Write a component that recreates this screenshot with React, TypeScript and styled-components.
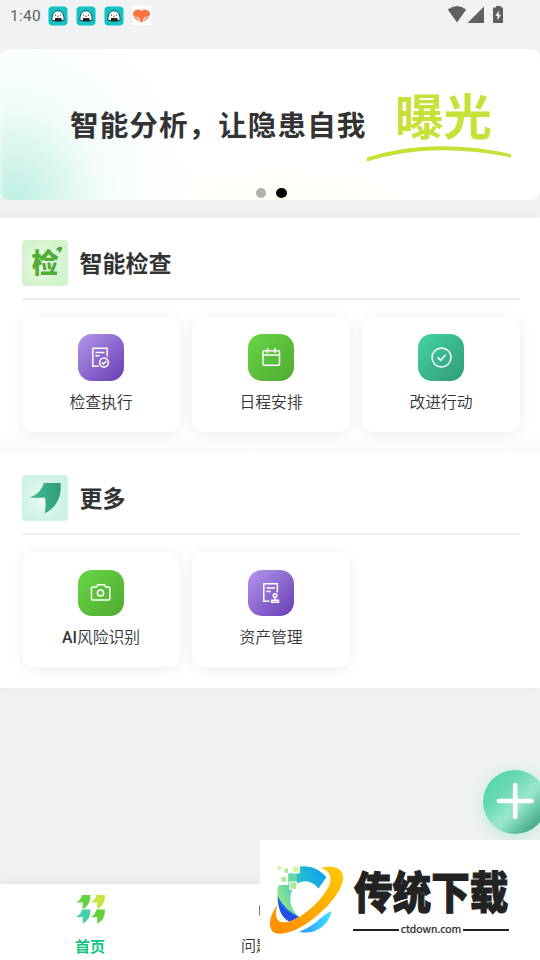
import React from "react";
import styled, { createGlobalStyle } from "styled-components";

const GlobalStyle = createGlobalStyle`
  * { box-sizing: border-box; }
  body {
    margin: 0;
    background: #f0f2f5;
    font-family: Roboto, "Noto Sans CJK SC", sans-serif;
    color: #333;
  }
`;

const Screen = styled.div`
  position: relative;
  width: 540px;
  height: 960px;
  overflow: hidden;
  display: flex;
  flex-direction: column;
  background: #f0f2f4;
`;

const StatusBar = styled.header`
  height: 49px;
  flex: none;
  display: flex;
  align-items: flex-start;
  justify-content: space-between;
  padding: 6px 35px 0 10px;
`;

const StatusGroup = styled.div<{ $gap: number }>`
  display: flex;
  align-items: center;
  height: 19px;
  gap: ${(p) => p.$gap}px;
`;

const Clock = styled.span`
  width: 30px;
  font-size: 15.4px;
  letter-spacing: 0.3px;
  line-height: 19px;
  color: #5e5f60;
  white-space: nowrap;
  padding-top: 1px;
`;

const Banner = styled.section`
  position: relative;
  height: 151px;
  flex: none;
  border-radius: 9px;
  overflow: hidden;
  display: flex;
  padding-left: 70px;
  background:
    linear-gradient(90deg, rgba(255, 255, 255, 0.35), rgba(255, 255, 255, 0) 4px),
    radial-gradient(ellipse 115px 125px at 18px 156px, rgba(176, 235, 220, 0.75), rgba(196, 240, 229, 0.4) 40%, rgba(225, 248, 242, 0.12) 75%, rgba(255, 255, 255, 0) 100%),
    radial-gradient(ellipse 190px 185px at 0 130px, rgba(209, 245, 237, 0.75), rgba(235, 251, 247, 0.5) 50%, rgba(255, 255, 255, 0) 100%),
    radial-gradient(ellipse 200px 50px at 280px 151px, #fffff8, rgba(255, 255, 255, 0)),
    #fff;
`;

const Slogan = styled.div`
  width: 297px;
  padding-top: 54px;
  font-size: 28.6px;
  line-height: 42px;
  letter-spacing: 1.05px;
  font-weight: 700;
  font-family: "Noto Sans CJK SC", sans-serif;
  white-space: nowrap;
`;

const Highlight = styled.div`
  width: 146px;
  display: flex;
  flex-direction: column;
  padding-top: 31px;
  color: #c8e139;
  font: 700 48.4px/68px "Noto Sans CJK SC", sans-serif;
  text-indent: 28px;
  white-space: nowrap;
  svg { display: block; margin-top: -2px; }
`;

const Dots = styled.div`
  position: absolute;
  left: 255.500px;
  bottom: 2px;
  display: flex;
  gap: 10px;
`;

const Dot = styled.i<{ $active?: boolean }>`
  width: ${(p) => (p.$active ? 11 : 10)}px;
  height: 10px;
  border-radius: 50%;
  background: ${(p) => (p.$active ? "#000" : "#b0b0b0")};
`;

const Sections = styled.main`
  margin-top: 18px;
  flex: none;
  box-shadow: 0 0 18px rgba(0, 0, 0, 0.035);
`;

const Section = styled.section`
  height: 235px;
  padding: 22px 20px 0 22px;
  background: #fff;
  &:first-child { background: linear-gradient(#fff 212px, #fafafa 235px); }
`;

const SectionHeader = styled.div`
  display: flex;
  align-items: flex-start;
  gap: 12px;
  height: 60px;
  border-bottom: 2px solid #eee;
`;

const SectionBadge = styled.div<{ $tone: string }>`
  width: 46px;
  height: 46px;
  border-radius: 4px;
  overflow: hidden;
  background: radial-gradient(circle at 45% 50%, #f2fbf2 0, ${(p) => p.$tone} 65%);
  svg { display: block; }
`;

const SectionTitle = styled.h2`
  margin: 0 0 0 -0.5px;
  font: 700 23px/45px "Noto Sans CJK SC", sans-serif;
`;

const CardGrid = styled.div`
  display: grid;
  grid-template-columns: repeat(3, 158px);
  gap: 12px;
  margin-top: 17px;
`;

const Card = styled.button<{ $lower?: boolean }>`
  height: 115px;
  padding: ${(p) => (p.$lower ? 18 : 17)}px 0 0;
  border: 0;
  border-radius: 11px;
  background: #fff;
  box-shadow: 0 2px 14px rgba(0, 0, 0, 0.08);
  display: flex;
  flex-direction: column;
  align-items: center;
  color: #333;
`;

const fills = {
  purple: "linear-gradient(135deg, #b092ea 5%, #6d43b7 92%)",
  green: "linear-gradient(135deg, #66d444 5%, #51ac33 95%)",
  teal: "linear-gradient(135deg, #42d2a4 5%, #329d7b 95%)",
};

const IconTile = styled.span<{ $fill: keyof typeof fills; $lower?: boolean }>`
  width: 46px;
  height: ${(p) => (p.$lower ? 46 : 47)}px;
  border-radius: 14px;
  background: ${(p) => fills[p.$fill]};
  svg { display: block; fill: none; stroke: #fff; stroke-width: 1.5; }
`;

const CardLabel = styled.span`
  margin-top: 10px;
  font: 350 15.8px/24px Roboto, "Noto Sans CJK SC", sans-serif;
  white-space: nowrap;
`;

const Latin = styled.span`
  font-weight: 500;
`;

const AddButton = styled.button`
  position: absolute;
  left: 483px;
  top: 770px;
  width: 64px;
  height: 64px;
  padding: 0;
  border: 0;
  border-radius: 50%;
  background: linear-gradient(135deg, #50d5aa 8%, #68d9b3 32%, #98e6cc 54%, #94e3c9 58%, #52b394 80%, #359c7a);
  box-shadow: 0 3px 16px rgba(66, 210, 164, 0.3);
  svg { display: block; }
`;

const TabBar = styled.nav`
  margin-top: auto;
  height: 77px;
  flex: none;
  display: grid;
  grid-template-columns: repeat(3, 180px);
  background: #fff;
  border-top: 1px solid #e7e8e8;
  box-shadow: 0 -2px 14px rgba(0, 0, 0, 0.06);
`;

const Tab = styled.div<{ $active?: boolean }>`
  display: flex;
  flex-direction: column;
  align-items: center;
  padding-top: 10px;
  gap: 11px;
  font: ${(p) => (p.$active ? 700 : 350)} 15px/22px "Noto Sans CJK SC", sans-serif;
  color: ${(p) => (p.$active ? "#13c584" : "#333")};
  svg { display: block; }
`;

const WideTabLabel = styled.span`
  width: 58px;
  margin-top: -1px;
`;

const SiteMark = styled.aside`
  position: absolute;
  left: 260px;
  top: 840px;
  width: 280px;
  height: 120px;
  padding: 24px 0 0 8px;
  display: flex;
  gap: 8px;
  background: #fff;
  color: #222;
`;

const SiteText = styled.div`
  width: 156px;
`;

const SiteName = styled.div`
  height: 46px;
  margin: 2px 0 8px 1px;
  font: 900 38.6px/46px "Noto Sans CJK SC", sans-serif;
  white-space: nowrap;
  transform: scaleY(1.16);
  -webkit-text-stroke: 0.9px #222;
`;

const SiteAddress = styled.div`
  display: flex;
  align-items: center;
  gap: 2px;
  height: 18px;
  font: 400 10.5px/16px "Noto Sans CJK SC", sans-serif;
  -webkit-text-stroke: 0.2px #222;
  &::before, &::after {
    content: "";
    flex: 1;
    height: 2px;
    margin-top: 2px;
    background: #222;
  }
`;

const ChatBadge = () => (
  <svg width="20" height="20" viewBox="0 0 20 20">
    <rect x=".5" y=".5" width="19" height="19" rx="4" fill="#13c1c3" />
    <path d="M4 14.500C3.500 9 6 4.800 10 4.800S16.500 9 16 14.500Z" fill="#fff" stroke="#17484a" strokeWidth="1" />
    <path d="M7 12h6.500v3.500H7Z" fill="#222" />
    <path d="M7.500 8.500v1.200M12.500 8.500v1.200M9.300 10.200h1.500" stroke="#333" />
  </svg>
);

const HeartBadge = () => (
  <svg width="19" height="19" viewBox="0 0 19 19">
    <path d="M0 0h19v19H0Z" fill="#fff" />
    <circle cx="9.500" cy="9" r="7.500" fill="#fff1e6" />
    <path d="M9.500 16.500C4 14 .8 10.800 1 7.300 1.300 3.500 6.800 2.500 9.500 5c2.700-2.500 8.200-1.500 8.500 2.300.2 3.500-3 6.700-8.500 9.200Z" fill="#fa7444" />
    <path d="m3 10 4 3.500 1 3M16 10l-4 3.500-1 3M6 11l1.500 3M13 11l-1.500 3" stroke="#fff" strokeWidth=".9" fill="none" />
  </svg>
);

const Signals = () => (
  <svg width="58" height="19" viewBox="0 0 58 19" fill="#606060">
    <path d="M.8 3.500Q10-3.500 19.200 3.500L10 16.500Z" />
    <path d="M37 .5V17H20.500Z" />
    <path d="M49 0h5v1.500h2V17H46V1.500h3Z" />
    <path d="m51.800 4.500-3.500 5.500h2.200v4.200L54 8.700h-2.200Z" fill="#f0f2f5" />
  </svg>
);

const InspectBadge = () => (
  <svg width="46" height="46" viewBox="0 0 46 46">
    <text x="9.500" y="33" fontSize="27" fontWeight="900" fontFamily="Noto Sans CJK SC, sans-serif" fill="#51ad33">检</text>
    <path d="M34 10.500q.6-3 3-3.500H40q.5 4-3.300 6l.3-2.700Z" fill="#43a928" />
  </svg>
);

const LeafBadge = () => (
  <svg width="46" height="46" viewBox="0 0 46 46">
    <defs>
      <linearGradient id="leaf">
        <stop offset=".25" stopColor="#3bb68f" />
        <stop offset="1" stopColor="#329b7a" />
      </linearGradient>
    </defs>
    <path d="M7.500 22.700Q18.500 19 22 8h16.500c1.500 13.500-4 25-16 30.500q2-8 .5-15.800Z" fill="url(#leaf)" />
  </svg>
);

const ChecklistIcon = () => (
  <svg width="46" height="47" viewBox="0 0 46 47">
    <path d="M21 32.200H14.800V14.300h14.400v8.500M17.500 18.500h9M17.500 21.800h4" />
    <circle cx="26" cy="28.500" r="4.400" />
    <path d="m23.800 28.400 1.700 1.700 3-3.100" />
  </svg>
);

const CalendarIcon = () => (
  <svg width="46" height="47" viewBox="0 0 46 47">
    <rect x="15" y="16.700" width="16.500" height="14.500" rx="1" />
    <path d="M15 21h16.500M19.500 14v5M27 14v5" />
  </svg>
);

const CheckIcon = () => (
  <svg width="46" height="47" viewBox="0 0 46 47">
    <circle cx="23.500" cy="23.500" r="9.500" />
    <path d="m19.700 23.400 3 3 5-5.600" />
  </svg>
);

const CameraIcon = () => (
  <svg width="46" height="46" viewBox="0 0 46 46">
    <path d="M14.500 17h4l1.200-2.300h6.700l1.200 2.300h3.200q1 0 1 1v11q0 1-1 1H14.500q-1 0-1-1V18q0-1 1-1Z" />
    <circle cx="22.500" cy="23" r="3.100" />
  </svg>
);

const AssetIcon = () => (
  <svg width="46" height="46" viewBox="0 0 46 46">
    <path d="M21.500 31.200H15.800V13.800h13.500v8.700M18.500 18h8.500M18.500 21.500h4" />
    <circle cx="27" cy="25.500" r="1.800" />
    <path d="M27 27.500v2.300M23.700 32.200v-2h6.800v2ZM23 32.300h8" />
  </svg>
);

const HomeIcon = () => {
  const leaf = "M0 7.500Q4.500 5.500 6 0h8.300q1 9.500-7.600 14.300V7.500Z";
  return (
    <svg width="29" height="30" viewBox="0 0 29 30">
      <path d={leaf} fill="#62d440" transform="translate(0 1)" />
      <path d={leaf} fill="#c9e33e" transform="translate(14.500 1)" />
      <path d={leaf} fill="#43d2aa" transform="translate(0 15.500)" />
      <path d={leaf} fill="#64d03c" transform="translate(14.500 15.500)" />
    </svg>
  );
};

const IssueIcon = () => (
  <svg width="24" height="30" viewBox="0 0 24 30">
    <rect x="1.500" y="12" width="21" height="9" fill="none" stroke="#777" />
  </svg>
);

const SiteLogo = () => (
  <svg width="77" height="72" viewBox="39 87 231 216">
    <defs>
      <linearGradient id="blueRing" x1="0" y1=".5" x2="1" y2="0">
        <stop offset="0" stopColor="#8de58b" />
        <stop offset=".5" stopColor="#26bad1" />
        <stop offset="1" stopColor="#079df0" />
      </linearGradient>
      <linearGradient id="orbit" x1="0" y1="1" x2="1" y2="0">
        <stop offset="0" stopColor="#ff8a00" />
        <stop offset="1" stopColor="#ffcb00" />
      </linearGradient>
      <linearGradient id="lower">
        <stop offset="0" stopColor="#2996ff" />
        <stop offset="1" stopColor="#42e0ff" />
      </linearGradient>
    </defs>
    <path d="M214 127C184 89 135 84 101 108C68 130 61 174 72 211Q83 239 105 256L132 246C102 221 98 177 121 151C144 130 174 138 190 161Z" fill="url(#blueRing)" />
    <path d="M68 184C69 224 79 244 100 259L132 246Q90 227 68 184Z" fill="#1c65ee" />
    <path d="M71 202Q89 232 118 241L132 247L104 260Q72 242 71 202Z" fill="#244ee6" />
    <path d="M230 228Q210 236 194 252Q166 278 133 290Q164 298 193 281Q221 265 230 228Z" fill="url(#lower)" />
    <path d="M197 99C243 88 265 103 264 130C262 166 224 213 174 252C131 286 83 303 60 294C35 282 44 239 67 211C58 243 65 262 85 262C119 263 174 222 205 180C237 139 232 108 197 99Z" fill="url(#orbit)" />
    <path d="M60 87h66v28h-26v35H60Z" fill="#fff" />
    <path d="M101 117h24v23h-24Z" fill="#68d6a4" />
    <g fill="#a8ea91" stroke="#fff" strokeWidth="3">
      <path d="M112 93h21v21h-21Z" fill="#e0f29b" />
      <path d="M87 99h14v16H87ZM78 124h17v18H78ZM104 141h21v22h-21Z" />
      <path d="M66 91h14v14H66Z" fill="#ddf09c" />
    </g>
  </svg>
);

export default function App() {
  return (
    <>
      <GlobalStyle />
      <Screen>
        <StatusBar>
          <StatusGroup $gap={8}>
            <Clock>1:40</Clock>
            <ChatBadge />
            <ChatBadge />
            <ChatBadge />
            <HeartBadge />
          </StatusGroup>
          <StatusGroup $gap={0}><Signals /></StatusGroup>
        </StatusBar>

        <Banner>
          <Slogan>智能分析，让隐患自我</Slogan>
          <Highlight>
            曝光
            <svg width="146" height="16" viewBox="0 0 146 16">
              <path d="M0 11.200Q35 .3 72 .2Q112 0 144 8.300V11.500Q110 4.300 75 4.300Q38 4 0 15.500Z" fill="#c8e139" />
            </svg>
          </Highlight>
          <Dots><Dot /><Dot $active /></Dots>
        </Banner>

        <Sections>
          <Section>
            <SectionHeader>
              <SectionBadge $tone="#d3f3cd"><InspectBadge /></SectionBadge>
              <SectionTitle>智能检查</SectionTitle>
            </SectionHeader>
            <CardGrid>
              <Card><IconTile $fill="purple"><ChecklistIcon /></IconTile><CardLabel>检查执行</CardLabel></Card>
              <Card><IconTile $fill="green"><CalendarIcon /></IconTile><CardLabel>日程安排</CardLabel></Card>
              <Card><IconTile $fill="teal"><CheckIcon /></IconTile><CardLabel>改进行动</CardLabel></Card>
            </CardGrid>
          </Section>
          <Section>
            <SectionHeader>
              <SectionBadge $tone="#cdf3e8"><LeafBadge /></SectionBadge>
              <SectionTitle>更多</SectionTitle>
            </SectionHeader>
            <CardGrid>
              <Card $lower><IconTile $fill="green" $lower><CameraIcon /></IconTile><CardLabel><Latin>AI</Latin>风险识别</CardLabel></Card>
              <Card $lower><IconTile $fill="purple" $lower><AssetIcon /></IconTile><CardLabel>资产管理</CardLabel></Card>
            </CardGrid>
          </Section>
        </Sections>

        <TabBar>
          <Tab $active><HomeIcon />首页</Tab>
          <Tab><IssueIcon /><WideTabLabel>问题</WideTabLabel></Tab>
        </TabBar>

        <AddButton aria-label="添加">
          <svg width="64" height="64" viewBox="0 0 64 64">
            <path d="M16 31h32.500M32.200 15v32" stroke="#fff" strokeWidth="4.600" strokeLinecap="round" />
          </svg>
        </AddButton>

        <SiteMark>
          <SiteLogo />
          <SiteText>
            <SiteName>传统下载</SiteName>
            <SiteAddress>ctdown.com</SiteAddress>
          </SiteText>
        </SiteMark>
      </Screen>
    </>
  );
}
